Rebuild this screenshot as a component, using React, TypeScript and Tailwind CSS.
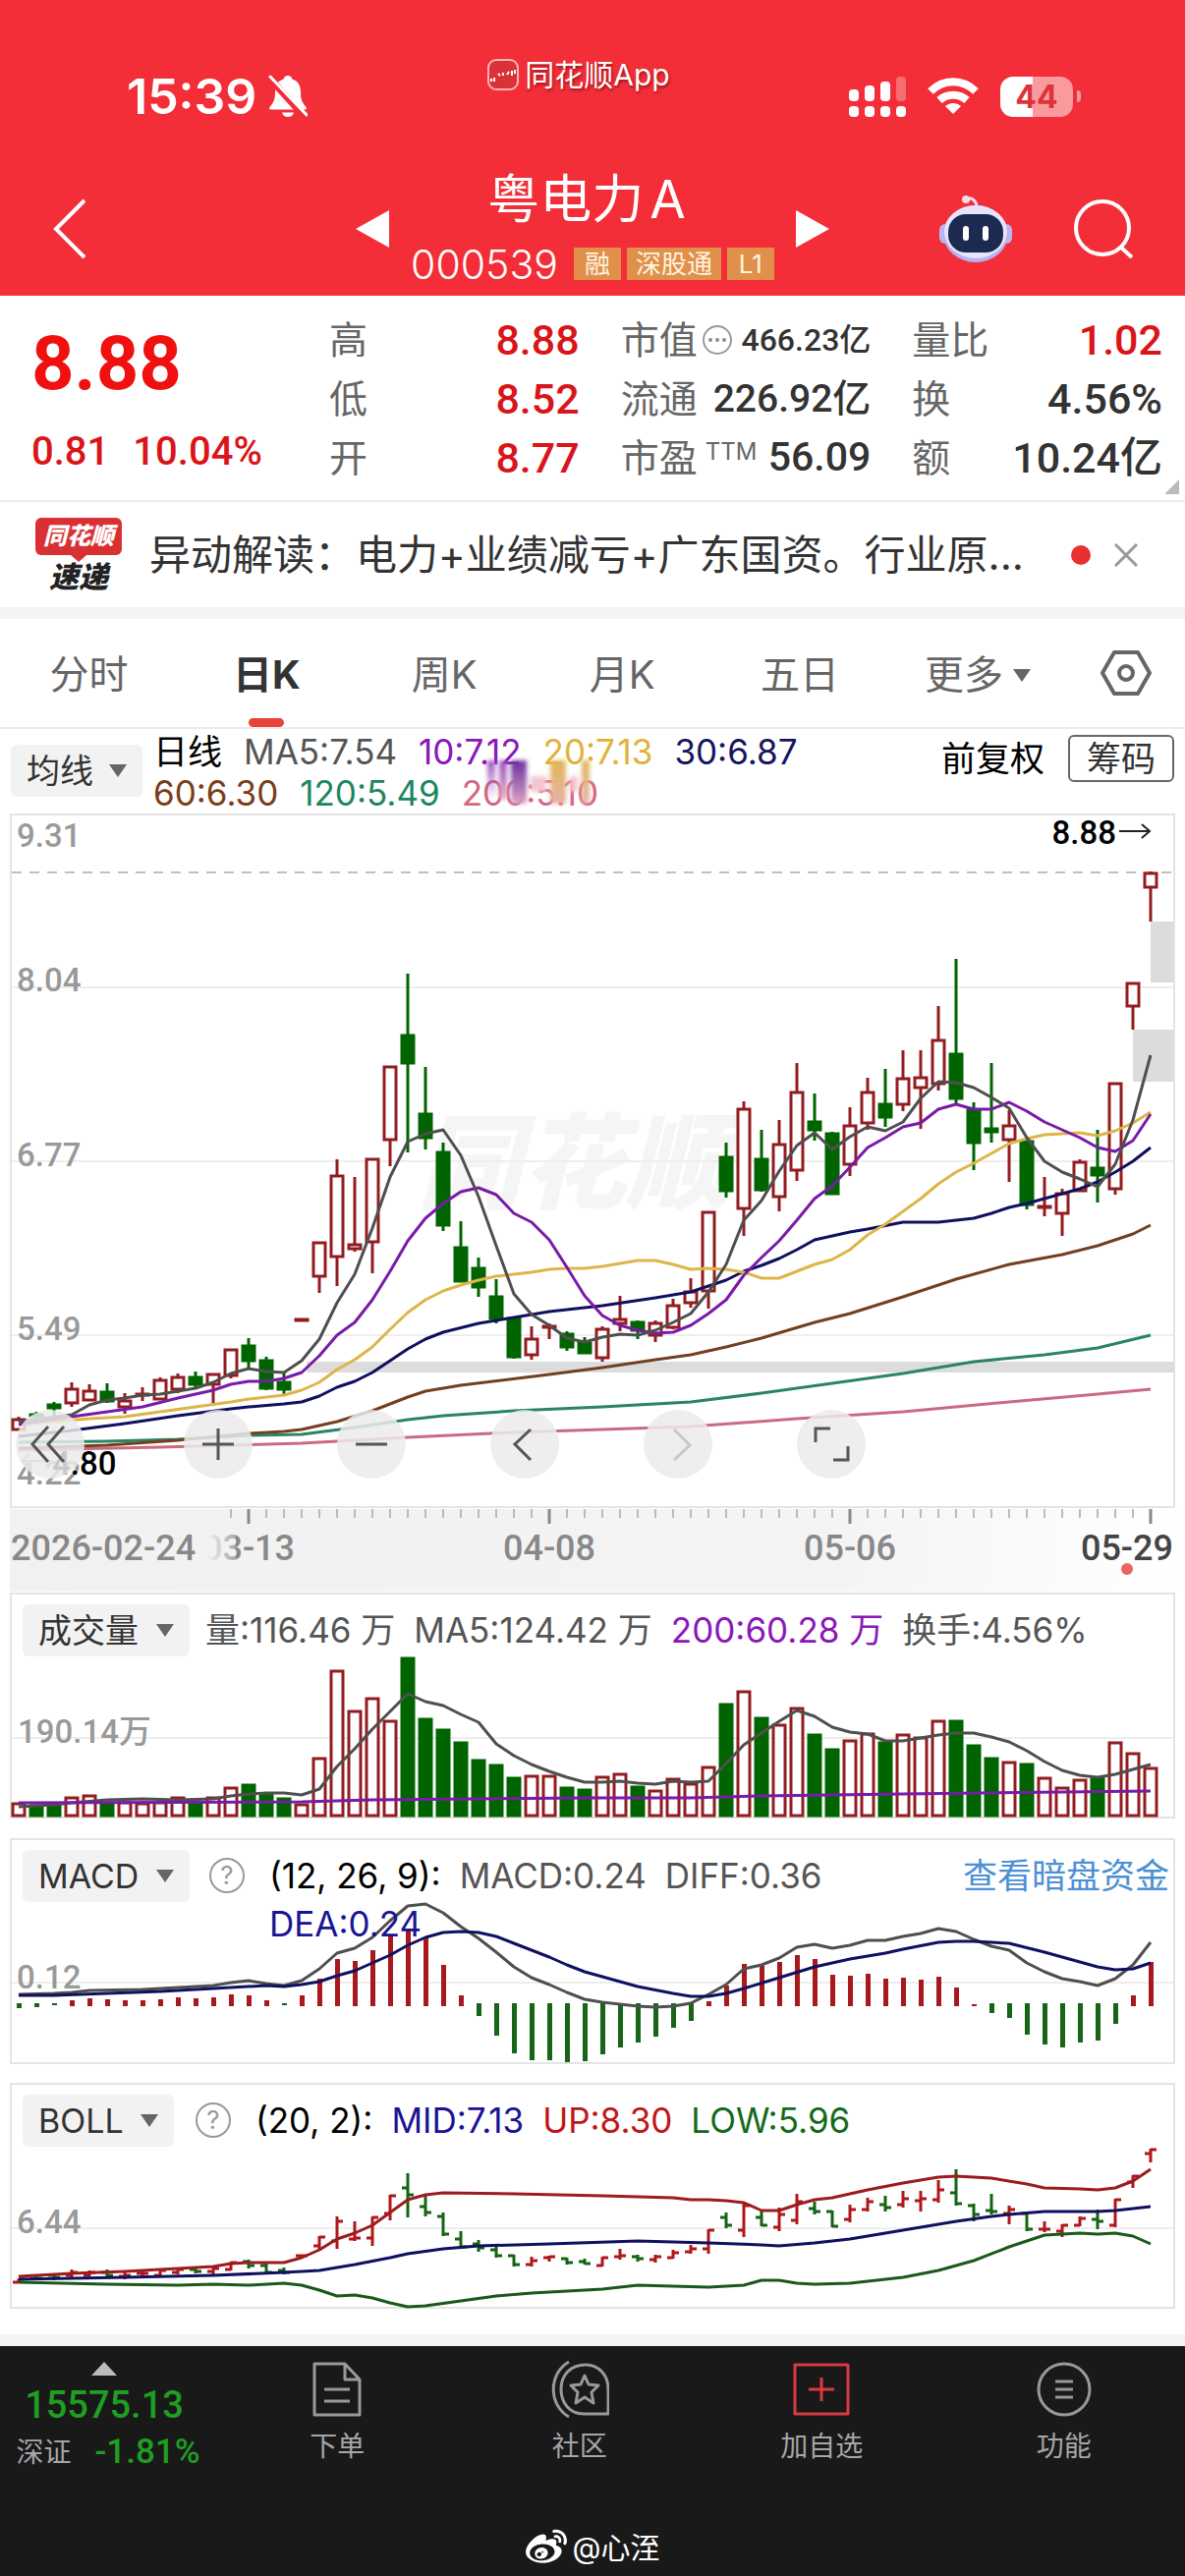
import React from "react";
import clsx from "clsx";
import { FaWeibo } from "react-icons/fa";

const STEP = 18;
const xAt = (i: number) => 19 + i * STEP;

const RED = "#931c20";
const GREEN = "#006400";
const GRAY = "#4f4f4f";
const PURPLE = "#7a1aa8";
const NAVY = "#101060";

// [body top, body bottom, high, low, up]
const candles: number[][] = [
  [1444, 1456, 1442, 1456, 1],
  [1439, 1441, 1437, 1444, 0],
  [1429, 1434, 1427, 1443, 0],
  [1413, 1429, 1407, 1432, 1],
  [1415, 1426, 1409, 1426, 1],
  [1416, 1427, 1408, 1428, 0],
  [1425, 1433, 1418, 1439, 1],
  [1418, 1420, 1412, 1426, 1],
  [1404, 1425, 1402, 1425, 1],
  [1401, 1415, 1398, 1418, 1],
  [1401, 1410, 1396, 1413, 0],
  [1398, 1410, 1398, 1428, 1],
  [1373, 1401, 1373, 1403, 1],
  [1369, 1386, 1362, 1393, 0],
  [1384, 1414, 1381, 1415, 0],
  [1406, 1415, 1397, 1419, 0],
  [1342, 1343, 1342, 1343, 1],
  [1264, 1300, 1264, 1316, 1],
  [1196, 1280, 1180, 1309, 1],
  [1266, 1272, 1198, 1274, 1],
  [1179, 1265, 1179, 1296, 1],
  [1085, 1161, 1085, 1187, 1],
  [1053, 1083, 991, 1173, 0],
  [1133, 1159, 1086, 1170, 0],
  [1172, 1248, 1163, 1253, 0],
  [1269, 1305, 1243, 1305, 0],
  [1290, 1311, 1280, 1320, 0],
  [1319, 1343, 1302, 1347, 0],
  [1341, 1382, 1341, 1383, 0],
  [1362, 1380, 1350, 1384, 1],
  [1349, 1351, 1347, 1363, 1],
  [1357, 1372, 1355, 1375, 0],
  [1366, 1378, 1361, 1378, 0],
  [1352, 1383, 1350, 1386, 1],
  [1342, 1348, 1319, 1355, 1],
  [1345, 1355, 1344, 1363, 0],
  [1346, 1360, 1344, 1366, 1],
  [1328, 1352, 1322, 1353, 1],
  [1314, 1327, 1301, 1331, 1],
  [1233, 1315, 1233, 1332, 1],
  [1177, 1213, 1163, 1219, 0],
  [1128, 1231, 1121, 1258, 1],
  [1179, 1212, 1150, 1213, 0],
  [1164, 1219, 1140, 1233, 1],
  [1111, 1192, 1082, 1202, 1],
  [1141, 1151, 1113, 1161, 0],
  [1153, 1216, 1152, 1216, 0],
  [1145, 1186, 1127, 1197, 1],
  [1111, 1144, 1097, 1150, 1],
  [1123, 1138, 1088, 1147, 0],
  [1097, 1125, 1069, 1131, 1],
  [1096, 1108, 1069, 1149, 1],
  [1058, 1104, 1024, 1110, 1],
  [1072, 1119, 976, 1123, 0],
  [1129, 1164, 1122, 1191, 0],
  [1148, 1153, 1082, 1163, 0],
  [1145, 1161, 1130, 1203, 1],
  [1161, 1227, 1161, 1231, 0],
  [1227, 1230, 1198, 1238, 1],
  [1214, 1236, 1210, 1258, 1],
  [1182, 1213, 1180, 1213, 1],
  [1188, 1197, 1150, 1224, 0],
  [1102, 1211, 1102, 1216, 1],
  [1000, 1025, 1000, 1048, 1],
  [888, 904, 887, 938, 1],
];

// flat lists of index, y
const ma5 = [
  0, 1447, 3, 1440, 4, 1430, 5, 1425, 6, 1423, 7, 1420, 8, 1419, 9, 1416, 10, 1413, 11, 1407, 12, 1398, 13, 1393, 14,
  1396, 15, 1397, 16, 1385, 17, 1363, 18, 1326, 19, 1297, 20, 1250, 21, 1198, 22, 1162, 23, 1154, 24, 1150, 25, 1176,
  26, 1218, 27, 1268, 28, 1317, 29, 1338, 30, 1349, 31, 1362, 32, 1366, 33, 1361, 34, 1358, 35, 1359, 36, 1354, 37,
  1346, 38, 1337, 39, 1315, 40, 1287, 41, 1242, 42, 1222, 43, 1192, 44, 1166, 45, 1153, 46, 1170, 47, 1157, 48, 1147,
  49, 1151, 50, 1142, 51, 1118, 52, 1101, 53, 1102, 54, 1107, 55, 1117, 56, 1128, 57, 1158, 58, 1182, 59, 1193, 60,
  1200, 61, 1208, 62, 1185, 63, 1140, 64, 1074,
];
const ma10 = [
  0, 1450, 3, 1442, 5, 1437, 7, 1432, 9, 1423, 11, 1415, 12, 1409, 13, 1406, 14, 1406, 15, 1403, 16, 1397, 17, 1380,
  18, 1359, 19, 1346, 20, 1323, 21, 1294, 22, 1263, 23, 1240, 24, 1225, 25, 1213, 26, 1209, 27, 1216, 28, 1235, 29,
  1244, 30, 1262, 31, 1290, 32, 1319, 33, 1339, 34, 1349, 35, 1354, 36, 1357, 37, 1356, 38, 1349, 39, 1337, 40, 1323,
  41, 1298, 42, 1280, 43, 1263, 44, 1242, 45, 1220, 46, 1207, 47, 1188, 48, 1168, 49, 1158, 50, 1147, 51, 1143, 52,
  1129, 53, 1124, 54, 1129, 55, 1129, 56, 1122, 57, 1131, 58, 1142, 59, 1150, 60, 1158, 61, 1168, 62, 1172, 63, 1161,
  64, 1134,
];
const ma20 = [
  0, 1450, 2, 1447, 4, 1444, 6, 1442, 8, 1437, 10, 1432, 12, 1427, 13, 1424, 15, 1420, 16, 1415, 17, 1407, 18, 1394,
  19, 1384, 20, 1371, 21, 1353, 22, 1336, 23, 1323, 24, 1314, 25, 1308, 26, 1303, 27, 1299, 28, 1297, 29, 1295, 30,
  1292, 31, 1291, 32, 1291, 33, 1289, 34, 1286, 35, 1283, 36, 1283, 37, 1287, 38, 1292, 39, 1291, 40, 1292, 41, 1295,
  42, 1301, 43, 1301, 44, 1294, 45, 1287, 46, 1282, 47, 1272, 48, 1257, 49, 1246, 50, 1233, 51, 1220, 52, 1205, 53,
  1193, 54, 1184, 55, 1174, 56, 1164, 57, 1159, 58, 1155, 59, 1154, 60, 1153, 61, 1156, 62, 1151, 63, 1143, 64, 1132,
];
const ma30 = [
  0, 1462, 3, 1456, 6, 1449, 9, 1441, 12, 1434, 13, 1432, 15, 1429, 16, 1427, 17, 1421, 18, 1412, 19, 1406, 20, 1397,
  21, 1385, 22, 1373, 23, 1363, 24, 1356, 26, 1347, 28, 1341, 30, 1335, 33, 1329, 36, 1321, 38, 1315, 39, 1309, 40,
  1303, 41, 1294, 42, 1288, 43, 1281, 44, 1272, 45, 1262, 47, 1254, 48, 1251, 50, 1244, 52, 1244, 53, 1242, 54, 1240,
  55, 1235, 56, 1229, 57, 1225, 58, 1220, 60, 1210, 61, 1203, 62, 1193, 63, 1182, 64, 1168,
];
const ma60 = [
  0, 1474, 5, 1471, 9, 1466, 13, 1459, 15, 1457, 16, 1455, 18, 1447, 20, 1436, 22, 1422, 23, 1416, 25, 1410, 30, 1399,
  33, 1392, 36, 1384, 38, 1379, 40, 1371, 42, 1362, 45, 1346, 47, 1337, 50, 1320, 53, 1302, 56, 1287, 59, 1277, 61,
  1268, 62, 1262, 63, 1256, 64, 1247,
];
const ma120 = [
  0, 1468, 5, 1467, 9, 1465, 13, 1461, 16, 1460, 19, 1453, 22, 1445, 24, 1441, 28, 1436, 33, 1432, 38, 1427, 42, 1418,
  46, 1408, 50, 1398, 54, 1386, 58, 1379, 61, 1372, 64, 1359,
];
const ma200 = [
  0, 1476, 8, 1473, 16, 1469, 22, 1463, 28, 1458, 33, 1455, 38, 1452, 44, 1444, 50, 1437, 56, 1427, 61, 1419, 64, 1414,
];

const volumes = [
  14, 12, 13, 20, 22, 14, 15, 14, 15, 20, 14, 20, 30, 33, 24, 19, 13, 60, 149, 108, 121, 98, 162, 100, 89, 76, 58, 53,
  40, 42, 42, 30, 28, 41, 44, 31, 27, 39, 34, 51, 115, 128, 101, 94, 111, 84, 69, 78, 85, 76, 84, 81, 98, 98, 73, 60,
  56, 54, 40, 30, 38, 40, 76, 65, 50,
];
const volMa5 = [
  0, 1839, 1, 1838, 2, 1837, 3, 1835, 5, 1832, 7, 1831, 9, 1832, 11, 1831, 12, 1828, 13, 1826, 14, 1825, 15, 1825, 16,
  1827, 17, 1821, 18, 1798, 19, 1780, 20, 1760, 21, 1742, 22, 1724, 23, 1732, 24, 1736, 25, 1745, 26, 1753, 27, 1775,
  28, 1787, 29, 1796, 30, 1803, 31, 1809, 32, 1814, 33, 1814, 34, 1813, 35, 1815, 36, 1816, 37, 1813, 38, 1814, 39,
  1813, 40, 1795, 41, 1776, 42, 1764, 43, 1752, 44, 1741, 45, 1747, 46, 1758, 47, 1763, 48, 1765, 49, 1772, 50, 1772,
  51, 1769, 52, 1766, 53, 1764, 54, 1764, 55, 1768, 56, 1773, 57, 1782, 58, 1793, 59, 1802, 60, 1807, 61, 1809, 62,
  1806, 63, 1801, 64, 1796,
];
const volMa200 = [0, 1835, 16, 1834, 20, 1832, 32, 1830, 38, 1830, 42, 1828, 50, 1826, 64, 1823];

const macd = [
  -4, -3, -1, 5, 7, 6, 5, 5, 6, 8, 7, 8, 11, 10, 5, -1, 10, 27, 47, 45, 56, 72, 77, 69, 41, 10, -12, -32, -50, -57, -57,
  -59, -58, -51, -44, -39, -33, -24, -17, 4, 20, 42, 40, 44, 51, 47, 31, 30, 32, 27, 28, 26, 29, 18, 1, -9, -14, -31,
  -41, -44, -39, -37, -20, 10, 44,
];
const diff = [
  0, 2030, 2, 2029, 3, 2028, 4, 2026, 7, 2025, 10, 2022, 11, 2021, 12, 2018, 13, 2016, 14, 2019, 15, 2021, 16, 2016,
  17, 2004, 18, 1988, 19, 1983, 20, 1972, 21, 1955, 22, 1940, 23, 1938, 24, 1947, 25, 1961, 26, 1973, 27, 1987, 28,
  2002, 29, 2013, 30, 2020, 31, 2028, 32, 2035, 33, 2038, 34, 2040, 35, 2042, 36, 2043, 37, 2042, 38, 2039, 39, 2030,
  40, 2020, 41, 2004, 42, 2000, 43, 1993, 44, 1982, 45, 1979, 46, 1983, 47, 1980, 48, 1975, 49, 1975, 50, 1971, 51,
  1968, 52, 1963, 53, 1966, 54, 1974, 55, 1981, 56, 1985, 57, 1998, 58, 2007, 59, 2014, 60, 2017, 61, 2021, 62, 2014,
  63, 2000, 64, 1977,
];
const dea = [
  0, 2031, 2, 2031, 5, 2029, 8, 2027, 11, 2024, 14, 2021, 15, 2022, 16, 2020, 17, 2017, 18, 2011, 19, 2006, 20, 1998,
  21, 1990, 22, 1980, 23, 1972, 24, 1967, 25, 1966, 26, 1967, 27, 1971, 28, 1978, 29, 1985, 30, 1992, 31, 2000, 32,
  2007, 33, 2012, 35, 2022, 37, 2029, 38, 2032, 39, 2032, 40, 2029, 41, 2024, 43, 2013, 45, 2002, 47, 1994, 49, 1988,
  50, 1984, 52, 1977, 53, 1976, 54, 1976, 56, 1978, 58, 1987, 60, 1997, 61, 2002, 62, 2005, 63, 2004, 64, 1998,
];

const bollUp = [
  0, 2317, 3, 2314, 6, 2312, 9, 2309, 11, 2307, 12, 2304, 13, 2303, 15, 2303, 16, 2298, 17, 2290, 18, 2279, 19, 2273,
  20, 2265, 21, 2252, 22, 2239, 23, 2234, 24, 2232, 28, 2233, 33, 2235, 37, 2237, 38, 2239, 39, 2239, 40, 2240, 41,
  2242, 42, 2250, 43, 2250, 44, 2244, 45, 2239, 46, 2237, 48, 2229, 50, 2222, 52, 2216, 53, 2215, 55, 2217, 57, 2223,
  58, 2227, 60, 2228, 61, 2229, 62, 2227, 63, 2220, 64, 2208,
];
const bollMid = [
  0, 2320, 6, 2318, 11, 2316, 15, 2313, 17, 2311, 19, 2305, 21, 2298, 22, 2294, 24, 2289, 26, 2286, 30, 2284, 35, 2281,
  39, 2283, 42, 2285, 43, 2286, 45, 2283, 47, 2279, 49, 2273, 51, 2267, 53, 2261, 55, 2256, 56, 2254, 58, 2251, 61,
  2251, 62, 2250, 63, 2248, 64, 2246,
];
const bollLow = [
  0, 2323, 5, 2325, 9, 2326, 11, 2325, 13, 2326, 15, 2324, 16, 2326, 17, 2331, 18, 2337, 19, 2336, 20, 2339, 21, 2344,
  22, 2348, 23, 2347, 25, 2342, 27, 2337, 29, 2334, 31, 2332, 33, 2330, 35, 2326, 39, 2328, 41, 2326, 42, 2321, 43,
  2321, 44, 2324, 45, 2325, 47, 2324, 49, 2320, 50, 2318, 52, 2311, 54, 2301, 56, 2287, 57, 2281, 58, 2275, 59, 2274,
  60, 2273, 61, 2274, 62, 2273, 63, 2276, 64, 2284,
];

const bollY = (y: number) => Math.round(2188 + (y - 887) * 0.237);

const toPoints = (flat: number[]) => {
  const out: string[] = [];
  for (let i = 0; i < flat.length; i += 2) out.push(`${xAt(flat[i])},${flat[i + 1]}`);
  return out.join(" ");
};

const Line = ({ data, color }: { data: number[]; color: string }) => (
  <polyline points={toPoints(data)} fill="none" stroke={color} strokeWidth={3} strokeLinejoin="round" />
);

const Frame = ({ y, height, grid }: { y: number; height: number; grid: number[] }) => (
  <g stroke="#e4e4e4" strokeWidth={2} fill="none">
    {grid.map((g) => (
      <line key={g} x1={12} x2={1194} y1={g} y2={g} stroke="#eeeeee" />
    ))}
    <rect x={11} y={y} width={1184} height={height} />
  </g>
);

const AxisText = ({ x, y, fill, anchor, date, children }: any) => (
  <text
    x={x}
    y={y}
    fill={fill}
    textAnchor={anchor}
    className={clsx("font-['Roboto','Noto_Sans_CJK_SC',sans-serif] font-medium", date ? "text-[36px]" : "text-[33px]")}
  >
    {children}
  </text>
);

const Arrow = ({ className }: { className?: string }) => (
  <svg viewBox="0 0 18 13" className={clsx("w-[18px] h-[13px]", className)}>
    <path d="M0 0H18L9 13Z" fill="#666" />
  </svg>
);

const Dropdown = ({ id, label, options, className }: any) => (
  <div className={clsx("relative shrink-0", className)}>
    <select
      id={id}
      aria-label={label}
      className="appearance-none w-full h-[53px] pl-4 rounded-md bg-[#f2f2f2] text-[34px] leading-[53px] text-[#333] outline-none"
    >
      {options.map((o: string) => (
        <option key={o}>{o}</option>
      ))}
    </select>
    <Arrow className="absolute right-4 top-5 pointer-events-none" />
  </div>
);

const Help = () => (
  <button
    aria-label="说明"
    className="size-9 mt-2 shrink-0 rounded-full border-2 border-[#999] text-[26px] leading-8 text-[#999] text-center"
  >
    ?
  </button>
);

const StatusBar = () => (
  <div className="grid grid-cols-3 items-center pt-14 h-[140px]">
    <div className="flex items-center gap-3 pl-[129px]">
      <span className="text-[50px] leading-[60px] font-semibold">15:39</span>
      <svg viewBox="0 0 40 44" className="w-10 h-11 shrink-0">
        <path
          d="M20 1c-2.5 0-4 1.5-4.3 3.5C9 6.5 7 12 7 18c0 8-2 11-5.5 15-.8 1-.3 2.5 1 2.5h35c1.3 0 1.8-1.5 1-2.5C35 29 33 26 33 18c0-6-2-11.5-8.7-13.5C24 2.5 22.5 1 20 1zM14 38.500c.8 3 3.2 4.500 6 4.500s5.200-1.500 6-4.500z"
          fill="#fff"
        />
        <path d="M0 2L38 44" stroke="#f32e38" strokeWidth={7} />
        <path d="M2 2L39 41" stroke="#fff" strokeWidth={3} strokeLinecap="round" />
      </svg>
    </div>
    <div className="flex items-center justify-center gap-1.5 self-start pr-7 [text-shadow:1px_2px_3px_rgba(90,0,0,0.6)]">
      <svg viewBox="0 0 32 32" className="size-8">
        <rect x={1} y={1} width={30} height={30} rx={8} fill="#d93238" stroke="#ffb3b3" strokeWidth={2} />
        <path d="M4 20v3M7 19v4M11 15l2 2M16 14v3M20 16l2-3M25 12v5M28 11v4" stroke="#fff" strokeWidth={2} />
      </svg>
      <span className="text-[30px] leading-10">同花顺App</span>
    </div>
    <div className="flex items-center justify-end gap-[22px] pr-[106px]">
      <svg viewBox="0 0 58 42" className="w-[58px] h-[42px]" fill="#fff">
        <rect x={0} y={14} width={10} height={12} rx={4} />
        <rect x={16} y={10} width={10} height={16} rx={4} />
        <rect x={32} y={6} width={10} height={20} rx={4} />
        <rect x={48} y={1} width={10} height={25} rx={4} opacity={0.3} />
        {[0, 16, 32, 48].map((x) => (
          <rect key={x} x={x} y={31} width={10} height={11} rx={4} />
        ))}
      </svg>
      <svg viewBox="0 0 52 38" className="w-[52px] h-[38px]" fill="none" stroke="#fff" strokeWidth={8}>
        <path d="M3 14C16 1 36 1 49 14" />
        <path d="M12 23C20 16 32 16 40 23" />
        <path d="M26 37L18 29C23 25 29 25 34 29Z" fill="#fff" stroke="none" />
      </svg>
      <div className="flex items-center gap-1">
        <div className="w-[74px] h-[41px] rounded-[13px] bg-linear-to-r from-white from-45% to-[#f99a9e] to-45% text-center text-[32px] leading-[41px] font-bold text-[#e0323a]">
          44
        </div>
        <div className="w-1 h-3 rounded-r-full bg-[#f99a9e]" />
      </div>
    </div>
  </div>
);

const Robot = () => (
  <svg viewBox="0 0 74 68" className="w-[74px] h-[68px]">
    <path d="M38 12C38 6 34 2 28 3" fill="none" stroke="#f0dcf5" strokeWidth={3} />
    <circle cx={27} cy={4} r={4} fill="#f8dce4" />
    <rect x={0} y={29} width={12} height={20} rx={6} fill="#b9b6ee" />
    <rect x={62} y={29} width={12} height={20} rx={6} fill="#b9b6ee" />
    <ellipse cx={37} cy={39} rx={33} ry={29} fill="#b6b0f0" />
    <ellipse cx={37} cy={37} rx={32} ry={27} fill="#e8e4fb" />
    <rect x={9} y={19} width={56} height={39} rx={18} fill="#1c2a50" />
    <rect x={24} y={31} width={6} height={15} rx={3} fill="#fff" />
    <rect x={44} y={31} width={6} height={15} rx={3} fill="#fff" />
  </svg>
);

const TitleBar = () => (
  <div className="grid grid-cols-[1fr_auto_1fr] items-center pt-6 h-[161px]">
    <button aria-label="返回" className="pl-[54px]">
      <svg viewBox="0 0 34 62" className="w-[34px] h-[62px]" fill="none" stroke="#fff" strokeWidth={4}>
        <path d="M32 2L3 31L32 60" />
      </svg>
    </button>
    <div className="flex items-center gap-[22px]">
      <button aria-label="上一只">
        <svg viewBox="0 0 34 38" className="w-[34px] h-[38px]">
          <path d="M34 0V38L0 19Z" fill="#fff" />
        </svg>
      </button>
      <div className="flex flex-col items-center">
        <h1 className="flex gap-1.5 pr-3 text-[53px] leading-[72px]">粤电力<span>A</span></h1>
        <div className="flex items-center gap-1.5">
          <span className="mr-2.5 text-[41px] leading-[60px] font-light">000539</span>
          {["融", "深股通", "L1"].map((tag) => (
            <span key={tag} className="min-w-12 px-[9px] bg-[#e0904a] text-[26px] leading-[33px] text-center text-[#fff4e0]">
              {tag}
            </span>
          ))}
        </div>
      </div>
      <button aria-label="下一只">
        <svg viewBox="0 0 34 38" className="w-[34px] h-[38px]">
          <path d="M0 0V38L34 19Z" fill="#fff" />
        </svg>
      </button>
    </div>
    <div className="flex items-center justify-end gap-[62px] pr-[52px]">
      <button aria-label="助手">
        <Robot />
      </button>
      <button aria-label="搜索">
        <svg viewBox="0 0 62 60" className="w-[62px] h-[60px]" fill="none" stroke="#fff" strokeWidth={4}>
          <circle cx={30} cy={29} r={27} />
          <path d="M48 48L60 59" />
        </svg>
      </button>
    </div>
  </div>
);

const Stat = ({ label, value, red, extra, size = "text-[43px]" }: any) => (
  <div className="flex items-center justify-between h-[60px] whitespace-nowrap">
    <dt className="flex items-center text-[39px] text-[#666]">
      {label}
      {extra}
    </dt>
    <dd
      className={clsx(
        "font-['Roboto','Noto_Sans_CJK_SC',sans-serif] font-medium",
        size,
        red ? "text-[#d9151a]" : "text-[#333]",
      )}
    >
      {value}
    </dd>
  </div>
);

const Quote = () => (
  <section className="relative flex pl-8 pr-[23px] pt-[15px] h-[210px] border-b-2 border-[#ececec]">
    <div className="w-[303px] shrink-0 font-['Roboto',sans-serif] text-[#f01010]">
      <div className="text-[76px] leading-[108px] font-bold">8.88</div>
      <div className="flex gap-6 text-[40px] leading-[72px] font-medium text-[#d9151a]">
        <span>0.81</span>
        <span>10.04%</span>
      </div>
    </div>
    <dl className="grow grid grid-cols-3 grid-rows-3 grid-flow-col gap-x-[42px] h-[180px]">
      <Stat label="高" value="8.88" red />
      <Stat label="低" value="8.52" red />
      <Stat label="开" value="8.77" red />
      <Stat
        label="市值"
        value="466.23亿"
        size="text-[32px]"
        extra={
          <svg viewBox="0 0 32 32" className="size-8 ml-1" fill="#888">
            <circle cx={16} cy={16} r={14} fill="none" stroke="#999" strokeWidth={2} />
            <circle cx={9} cy={16} r={2} />
            <circle cx={16} cy={16} r={2} />
            <circle cx={23} cy={16} r={2} />
          </svg>
        }
      />
      <Stat label="流通" value="226.92亿" size="text-[39px]" />
      <Stat label="市盈" value="56.09" size="text-[41px]" extra={<span className="ml-2 mb-3 text-[24px] leading-6">TTM</span>} />
      <Stat label="量比" value="1.02" red />
      <Stat label="换" value="4.56%" />
      <Stat label="额" value="10.24亿" />
    </dl>
    <svg viewBox="0 0 15 15" className="absolute right-1.5 bottom-1.5 size-[15px]">
      <path d="M15 0V15H0Z" fill="#bbb" />
    </svg>
  </section>
);

const News = () => (
  <section className="flex items-center h-[107px] pl-9 pr-12">
    <div className="flex flex-col items-center w-[88px] mr-7 shrink-0 italic font-black">
      <span className="w-full h-[38px] rounded-md bg-[#d93034] text-center text-[24px] leading-[38px] text-white">同花顺</span>
      <svg viewBox="0 0 16 7" className="w-4 h-[7px]">
        <path d="M0 0H16L8 7Z" fill="#d93034" />
      </svg>
      <span className="text-[30px] leading-[30px] text-[#222]">速递</span>
    </div>
    <a href="#news" className="grow whitespace-nowrap text-[42px] leading-[60px] text-[#333]">
      异动解读：电力+业绩减亏+广东国资。行业原...
    </a>
    <span className="size-5 shrink-0 rounded-full bg-[#e8302e]" />
    <button aria-label="关闭" className="ml-6 shrink-0">
      <svg viewBox="0 0 24 24" className="size-6" stroke="#999" strokeWidth={3}>
        <path d="M1 1L23 23M23 1L1 23" />
      </svg>
    </button>
  </section>
);

const tabs = ["分时", "日K", "周K", "月K", "五日"];

const Tabs = () => (
  <nav className="flex h-[110px] border-t-[12px] border-[#f4f4f4] box-content text-[40px] text-[#666]">
    {tabs.map((tab, i) => (
      <button key={tab} className={clsx("relative w-[15%] h-full pt-1", i === 1 && "font-bold text-[#333]")}>
        {tab}
        {i === 1 && <span className="absolute bottom-0 left-1/2 -ml-[18px] w-9 h-[9px] rounded-full bg-[#e8423a]" />}
      </button>
    ))}
    <button className="flex items-center justify-center gap-2.5 w-[15%] pt-1">
      更多
      <Arrow />
    </button>
    <button aria-label="设置" className="grow flex items-center justify-center">
      <svg viewBox="0 0 52 46" className="w-[52px] h-[46px]" fill="none" stroke="#666" strokeWidth={4}>
        <path d="M14 2H38L50 23L38 44H14L2 23Z" strokeLinejoin="round" />
        <circle cx={26} cy={23} r={7} />
      </svg>
    </button>
  </nav>
);

const Averages = () => (
  <div className="flex h-[88px] pl-[11px] pr-[11px] border-t-2 border-[#ececec] text-[35px]">
    <Dropdown id="avg" label="均线" options={["均线"]} className="w-[134px] mt-4" />
    <div className="relative grow ml-[11px] pt-0.5 leading-[42px]">
      <div className="flex gap-[22px] whitespace-nowrap">
        <span className="text-black">日线</span>
        <span className="text-[#555]">MA5:7.54</span>
        <span className="text-[#8a17b8]">10:7.12</span>
        <span className="text-[#dfb23a]">20:7.13</span>
        <span className="text-[#15155f]">30:6.87</span>
      </div>
      <div className="flex gap-[22px] whitespace-nowrap">
        <span className="text-[#7a3d17]">60:6.30</span>
        <span className="text-[#1c8660]">120:5.49</span>
        <span className="text-[#d66581]">200:5.10</span>
      </div>
      <div className="absolute left-[340px] top-[32px] flex items-start gap-1 blur-[2px]">
        <span className="w-2 h-10 bg-linear-to-b from-[#9a50c0] to-transparent" />
        <span className="w-2 h-10 bg-linear-to-b from-[#9a50c0] to-[#e8b0c0]" />
        <span className="w-4 h-11 bg-linear-to-b from-[#6a2fa0] to-[#e0a0c0]" />
        <span className="w-4 h-4 mt-4 bg-[#f3c6d0]" />
        <span className="w-4 h-11 bg-linear-to-b from-[#e0b84e] to-[#e8b0a8]" />
        <span className="w-2 h-4 mt-4 bg-[#f3c6d0]" />
        <span className="w-2 h-11 bg-linear-to-b from-[#e0b84e] to-[#e8b0a8]" />
      </div>
    </div>
    <button className="h-[60px] shrink-0 text-[35px] text-black">前复权</button>
    <button className="h-12 mt-1.5 ml-6 px-[17px] shrink-0 rounded-md border-2 border-[#666] text-[35px] leading-[44px] text-[#333]">
      筹码
    </button>
  </div>
);

const chartButtons = [
  { label: "最左", d: "M33 17L17 35L33 53M49 17L33 35L49 53" },
  { label: "放大", d: "M19 35H51M35 19V51" },
  { label: "缩小", d: "M19 35H51" },
  { label: "左移", d: "M41 20L25 35L41 51" },
  { label: "右移", d: "M31 20L47 36L31 51", off: true },
  { label: "全屏", d: "M19 33V19H34M52 37V51H37" },
];

const PriceChart = () => (
  <div className="relative">
    <svg viewBox="0 828 1206 793" className="block w-full">
      <defs>
        <linearGradient id="strip" x1="0" y1="0" x2="1" y2="0">
          <stop offset="0" stopColor="#f1f1f1" />
          <stop offset="0.7" stopColor="#f4f4f4" />
          <stop offset="1" stopColor="#fff" />
        </linearGradient>
        <linearGradient id="fade" x1="0" y1="0" x2="1" y2="0">
          <stop offset="0.2" stopColor="#f2f2f2" />
          <stop offset="1" stopColor="#f2f2f2" stopOpacity="0.3" />
        </linearGradient>
      </defs>
      <text x={425} y={1222} fill="#f5f5f5" className="font-['Noto_Sans_CJK_SC',sans-serif] text-[106px] font-black italic">
        同花顺
      </text>
      <Frame y={829} height={705} grid={[1005, 1182, 1359]} />
      <g fill="#dcdcdc">
        <rect x={312} y={1386} width={883} height={11} />
        <rect x={1171} y={938} width={23} height={62} />
        <rect x={1153} y={1048} width={41} height={53} />
      </g>
      <line x1={12} x2={1194} y1={888} y2={888} stroke="#c8c0a8" strokeWidth={2} strokeDasharray="10 8" />
      {candles.map(([top, bottom, high, low, up], i) => (
        <g key={i} stroke={up ? RED : GREEN} strokeWidth={3}>
          <line x1={xAt(i)} x2={xAt(i)} y1={high} y2={low} />
          <rect x={xAt(i) - 6} y={top + 1} width={12} height={Math.max(bottom - top - 2, 1)} fill={up ? "#fff" : GREEN} />
        </g>
      ))}
      <Line data={ma200} color="#c96a80" />
      <Line data={ma120} color="#2b8462" />
      <Line data={ma60} color="#73401f" />
      <Line data={ma30} color={NAVY} />
      <Line data={ma20} color="#deb548" />
      <Line data={ma10} color={PURPLE} />
      <Line data={ma5} color={GRAY} />
      <g>
        <AxisText x={17} y={862} fill="#999">9.31</AxisText>
        <AxisText x={17} y={1009} fill="#999">8.04</AxisText>
        <AxisText x={17} y={1187} fill="#999">6.77</AxisText>
        <AxisText x={17} y={1364} fill="#999">5.49</AxisText>
        <AxisText x={17} y={1511} fill="#999">4.22</AxisText>
        <AxisText x={1136} y={859} fill="#000" anchor="end">8.88</AxisText>
        <AxisText x={53} y={1501} fill="#000">4.80</AxisText>
      </g>
      <path d="M1139 846H1170M1162 839L1170 846L1162 853" fill="none" stroke="#222" strokeWidth={2} />
      <path d="M54 1487H22M30 1480L22 1487L30 1494" fill="none" stroke="#aaa" strokeWidth={2} />

      <rect x={10} y={1536} width={1196} height={84} fill="url(#strip)" />
      {candles.map((_, i) => {
        const major = (i - 13) % 17 === 0;
        return i < 12 ? null : (
          <line
            key={i}
            x1={xAt(i)}
            x2={xAt(i)}
            y1={1536}
            y2={major ? 1551 : 1545}
            stroke={major ? "#888" : "#bbb"}
            strokeWidth={major ? 3 : 2}
          />
        );
      })}
      <AxisText x={253} y={1588} fill="#888" anchor="middle" date>03-13</AxisText>
      <rect x={204} y={1556} width={36} height={40} fill="url(#fade)" />
      <AxisText x={11} y={1588} fill="#888" date>2026-02-24</AxisText>
      <AxisText x={559} y={1588} fill="#888" anchor="middle" date>04-08</AxisText>
      <AxisText x={865} y={1588} fill="#888" anchor="middle" date>05-06</AxisText>
      <AxisText x={1194} y={1588} fill="#444" anchor="end" date>05-29</AxisText>
      <circle cx={1147} cy={1597} r={6} fill="#ed6468" />
    </svg>
    <div className="absolute left-4 top-[607px] flex gap-[86px]">
      {chartButtons.map(({ label, d, off }, i) => (
        <button
          key={label}
          aria-label={label}
          disabled={off}
          className={clsx("size-[70px] rounded-full bg-[#ebebeb]/85", i === 0 && "mr-[15px]")}
        >
          <svg viewBox="0 0 70 70" fill="none" stroke={off ? "#c8c8c8" : "#555"} strokeWidth={3}>
            <path d={d} />
          </svg>
        </button>
      ))}
    </div>
  </div>
);

// chart and its legend share one grid cell
const Panel = ({ viewBox, chart, children }: any) => (
  <section className="grid">
    <svg viewBox={viewBox} className="[grid-area:1/1] block w-full">
      {chart}
    </svg>
    <div className="[grid-area:1/1] flex items-start self-start pt-3 pl-[23px] pr-4 text-[35px] leading-[53px] whitespace-nowrap">
      {children}
    </div>
  </section>
);

const VolumeChart = () => (
  <Panel
    viewBox="0 1621 1206 250"
    chart={
      <>
        <Frame y={1622} height={228} grid={[1769]} />
        {volumes.map((v, i) => (
          <rect
            key={i}
            x={xAt(i) - 6}
            y={1850 - v}
            width={12}
            height={v - 2}
            stroke={candles[i][4] ? RED : GREEN}
            strokeWidth={3}
            fill={candles[i][4] ? "#fff" : GREEN}
          />
        ))}
        <Line data={volMa5} color={GRAY} />
        <Line data={volMa200} color={PURPLE} />
        <AxisText x={18} y={1774} fill="#999">190.14万</AxisText>
      </>
    }
  >
    <Dropdown id="vol" label="指标一" options={["成交量"]} className="w-[170px]" />
    <div className="flex gap-[19px] ml-4 text-[#555]">
      <span>量:116.46 万</span>
      <span>MA5:124.42 万</span>
      <span className="text-[#8a17b8]">200:60.28 万</span>
      <span>换手:4.56%</span>
    </div>
  </Panel>
);

const MacdChart = () => (
  <Panel
    viewBox="0 1871 1206 249"
    chart={
      <>
        <Frame y={1872} height={228} grid={[2018]} />
        {macd.map((v, i) => (
          <rect
            key={i}
            x={xAt(i) - 2}
            y={v > 0 ? 2041 - v : 2039}
            width={5}
            height={Math.abs(v) + 1}
            fill={v > 0 ? "#a8181c" : "#186418"}
          />
        ))}
        <Line data={diff} color={GRAY} />
        <Line data={dea} color={NAVY} />
        <AxisText x={17} y={2024} fill="#999">0.12</AxisText>
      </>
    }
  >
    <Dropdown id="macd" label="指标二" options={["MACD"]} className="w-[170px]" />
    <div className="flex ml-5">
      <Help />
    </div>
    <div className="ml-[25px]">
      <div className="flex gap-[19px] text-[#555]">
        <span className="text-black">(12, 26, 9):</span>
        <span>MACD:0.24</span>
        <span>DIFF:0.36</span>
      </div>
      <div className="-mt-1 text-[#1a1494]">DEA:0.24</div>
    </div>
    <a href="#fund" className="ml-auto text-[#4b8fd6]">
      查看暗盘资金
    </a>
  </Panel>
);

const BollChart = () => (
  <Panel
    viewBox="0 2120 1206 256"
    chart={
      <>
        <Frame y={2121} height={228} grid={[2268]} />
        {candles.map(([top, bottom, high, low, up], i) => {
          const x = xAt(i);
          const [open, close] = up ? [bottom, top] : [top, bottom];
          return (
            <path
              key={i}
              d={`M${x} ${bollY(high) - 1}V${bollY(low) + 1}M${x - 6} ${bollY(open)}H${x}M${x} ${bollY(close)}H${x + 6}`}
              stroke={up ? "#b0161a" : "#146414"}
              strokeWidth={3}
            />
          );
        })}
        <Line data={bollUp} color="#9c1c1e" />
        <Line data={bollMid} color={NAVY} />
        <Line data={bollLow} color="#1a581c" />
        <AxisText x={17} y={2273} fill="#999">6.44</AxisText>
      </>
    }
  >
    <Dropdown id="boll" label="指标三" options={["BOLL"]} className="w-[154px]" />
    <div className="flex ml-[22px]">
      <Help />
    </div>
    <div className="flex gap-[19px] ml-[25px]">
      <span className="text-black">(20, 2):</span>
      <span className="text-[#1a1494]">MID:7.13</span>
      <span className="text-[#c0161a]">UP:8.30</span>
      <span className="text-[#146a1a]">LOW:5.96</span>
    </div>
  </Panel>
);

const actions = [
  {
    label: "下单",
    icon: <path d="M38 4H7V56H53V20L38 4V20H53M17 30H43M17 42H43" />,
  },
  {
    label: "社区",
    icon: (
      <>
        <path d="M36 5C50 5 59 16 59 30V55H34C20 55 11 44 11 30S20 5 36 5Z" />
        <path d="M19 2C-2 14-2 46 19 58" />
        <path d="M35 16L39 25L49 26L42 33L44 44L35 38L26 44L28 33L21 26L31 25Z" />
      </>
    ),
  },
  {
    label: "加自选",
    red: true,
    icon: <path d="M3 5H57V55H3ZM30 18V42M17 30H43" />,
  },
  {
    label: "功能",
    icon: (
      <>
        <circle cx={30} cy={30} r={26} />
        <path d="M21 22H39M21 30H39M21 38H39" />
      </>
    ),
  },
];

const Footer = () => (
  <footer className="h-[246px] border-t-[12px] border-[#f4f4f4] bg-[#191919] text-[#a6a6a6]">
    <div className="flex">
      <button className="flex flex-col items-center w-[220px] shrink-0 pt-4">
        <svg viewBox="0 0 26 14" className="w-[26px] h-[14px] mr-2">
          <path d="M13 0L26 14H0Z" fill="#bbb" />
        </svg>
        <span className="mt-1 mr-2 font-['Roboto',sans-serif] font-medium text-[38px] leading-[52px] text-[#1e9e22]">15575.13</span>
        <span className="flex items-center gap-6 leading-[44px]">
          <span className="text-[28px]">深证</span>
          <span className="font-['Roboto',sans-serif] text-[35px] font-medium text-[#1e9e22]">-1.81%</span>
        </span>
      </button>
      {actions.map(({ label, icon, red }) => (
        <button key={label} className="flex flex-col items-center grow basis-0 pt-3.5">
          <svg
            viewBox="0 0 60 60"
            className="size-[60px]"
            fill="none"
            stroke={red ? "#d93a40" : "#999"}
            strokeWidth={3}
            strokeLinejoin="round"
          >
            {icon}
          </svg>
          <span className="mt-2 text-[28px] leading-[40px]">{label}</span>
        </button>
      ))}
    </div>
    <div className="flex items-center justify-center gap-1.5 mt-[54px] text-[30px] leading-10 text-white">
      <FaWeibo className="size-[42px]" />
      <span>@心洷</span>
    </div>
  </footer>
);

export default function App() {
  return (
    <main className="w-full bg-white font-['Inter','Noto_Sans_CJK_SC',sans-serif]">
      <header className="bg-[#f32e38] text-white">
        <StatusBar />
        <TitleBar />
      </header>
      <Quote />
      <News />
      <Tabs />
      <Averages />
      <PriceChart />
      <VolumeChart />
      <MacdChart />
      <BollChart />
      <Footer />
    </main>
  );
}
